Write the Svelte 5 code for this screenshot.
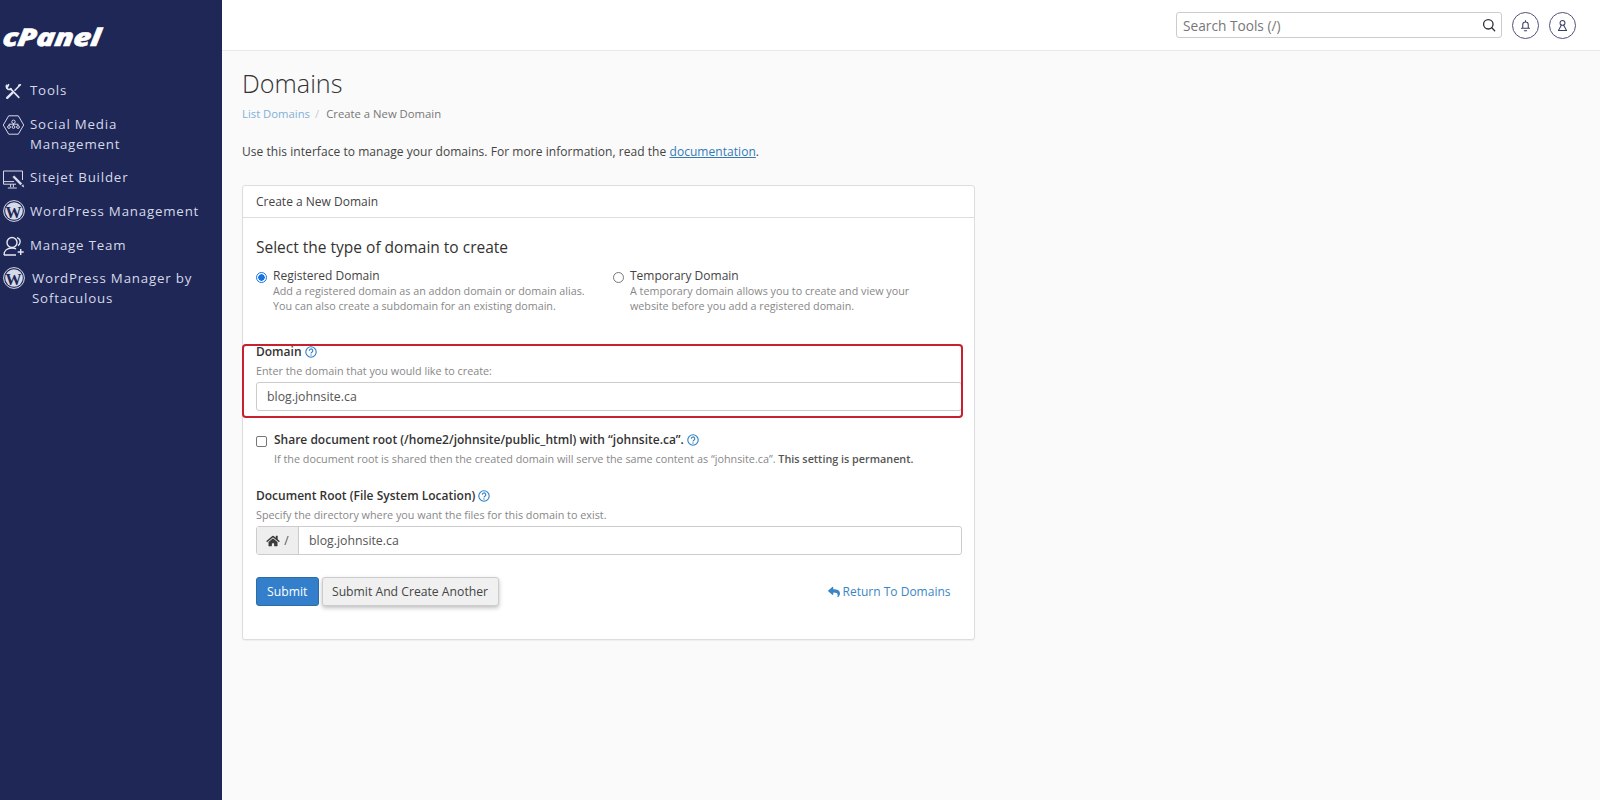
<script>
  const wp = 'wp';
</script>

{#snippet wpIcon()}
  <svg class="ic" viewBox="0 0 24 24" width="24" height="24">
    <circle cx="12" cy="12" r="10.4" fill="none" stroke="#d5d9e8" stroke-width="1"/>
    <circle cx="12" cy="12" r="8.8" fill="#d5d9e8"/>
    <text x="12" y="18.6" text-anchor="middle" class="wp-w">W</text>
  </svg>
{/snippet}

{#snippet help(cls)}
  <svg class="help {cls}" viewBox="0 0 12 12" width="12" height="12">
    <circle cx="6" cy="6" r="5.2" fill="none" stroke="#2f7fc1" stroke-width="1.1"/>
    <path d="M4.3 4.7a1.75 1.75 0 1 1 2.6 1.5c-.6.35-.9.6-.9 1.2" fill="none" stroke="#2f7fc1" stroke-width="1.1"/>
    <circle cx="6" cy="9" r=".7" fill="#2f7fc1"/>
  </svg>
{/snippet}

<div class="shell">
  <aside class="side">
    <div class="logo"><span class="logo-text">cPanel</span></div>
    <nav class="menu">
      <a class="item">
        <svg class="ic" viewBox="0 0 24 24" width="24" height="24" fill="none" stroke="#e4e7f2" stroke-width="1.6" stroke-linecap="round" stroke-linejoin="round">
          <path d="M16.8 19.4 8.4 10.6"/>
          <path d="M4.6 7.2 4.3 8.6a3.2 3.2 0 0 0 4.9 2.4M6.6 6.7 5.4 9.2"/>
          <path d="M17.8 7.2 13 12.2"/>
          <path d="M10.6 14.6 5.2 19.8" stroke-width="2.4"/>
          <path d="M18.4 6.8l-1.6.4"/>
        </svg>
        <span>Tools</span>
      </a>
      <a class="item">
        <svg class="ic" viewBox="0 0 24 24" width="24" height="24" fill="none" stroke="#d5d9e8" stroke-width="1">
          <path d="M6.7 3.8h9.6L21.7 13l-5.4 9.2H6.7L1.3 13z"/>
          <circle cx="11.5" cy="9.8" r="1.7"/><circle cx="7" cy="15" r="1.4"/><circle cx="11.5" cy="15" r="1.4"/><circle cx="16" cy="15" r="1.4"/>
          <path d="M7 13.6v-1.4h9v1.4M11.5 11.5v2.1"/>
        </svg>
        <span>Social Media<br>Management</span>
      </a>
      <a class="item">
        <svg class="ic" viewBox="0 0 24 24" width="24" height="24" fill="none" stroke="#d5d9e8" stroke-width="1">
          <path d="M20.5 15V6H1.5v13.2H14M1.5 16.6H12M8.6 19.2v3M11.4 19.2v3M5.8 23h9"/>
          <path d="M12.2 10.4l8 8.2-1.8 1.7-8-8.2z" fill="#d5d9e8" stroke="none"/>
          <path d="M19.4 21l1.9-1.7.9 3.2z" fill="#d5d9e8" stroke="none"/>
        </svg>
        <span>Sitejet Builder</span>
      </a>
      <a class="item">
        {@render wpIcon()}
        <span>WordPress Management</span>
      </a>
      <a class="item">
        <svg class="ic" viewBox="0 0 24 24" width="24" height="24" fill="none" stroke="#e4e7f2" stroke-width="1.4">
          <circle cx="10" cy="9.5" r="5"/>
          <path d="M2 22c0-4 3-7 8-7 1.5 0 3 .3 4 .9M2 22h12M15 4.6c2.4 1 3.5 2.8 3 5-.3 1.3-1 2.3-2 3M18.7 16v6M15.7 19h6"/>
        </svg>
        <span>Manage Team</span>
      </a>
      <a class="item soft">
        {@render wpIcon()}
        <span>WordPress Manager by<br>Softaculous</span>
      </a>
    </nav>
  </aside>

  <div class="main">
    <header class="top">
      <div class="search">
        <span class="placeholder">Search Tools (/)</span>
        <svg viewBox="0 0 16 16" width="14" height="14" fill="none" stroke="#2b2f3a" stroke-width="1.5" stroke-linecap="round">
          <circle cx="7.2" cy="7.2" r="5.4"/><path d="M11.2 11.2l3.3 3.3"/>
        </svg>
      </div>
      <button class="round" aria-label="Notifications">
        <svg viewBox="0 0 16 16" width="13" height="13" fill="none" stroke="#3b3f66" stroke-width="1.3" stroke-linecap="round">
          <path d="M4.6 11.5V7a3.4 3.4 0 0 1 6.8 0v4.5M3 11.5h10M6.6 14.4h2.8M8 3.4V2"/>
        </svg>
      </button>
      <button class="round" aria-label="Account">
        <svg viewBox="0 0 16 16" width="13" height="13" fill="none" stroke="#3b3f66" stroke-width="1.3" stroke-linecap="round" stroke-linejoin="round">
          <circle cx="8" cy="4.8" r="3"/><path d="M6.6 7.6 3 14.2h10L9.4 7.6"/>
        </svg>
      </button>
    </header>

    <main class="content">
      <h1>Domains</h1>
      <div class="crumbs"><a class="crumb-link">List Domains</a><span class="sep">/</span><span class="crumb-cur">Create a New Domain</span></div>
      <p class="intro">Use this interface to manage your domains. For more information, read the <a class="doc">documentation</a>.</p>

      <section class="card">
        <div class="card-head">Create a New Domain</div>
        <div class="card-body">
          <h2>Select the type of domain to create</h2>
          <div class="radios">
            <label class="radio first">
              <span class="dot on"></span>
              <span class="rtext">
                <span class="rtitle">Registered Domain</span>
                <span class="rdesc">Add a registered domain as an addon domain or domain alias.<br>You can also create a subdomain for an existing domain.</span>
              </span>
            </label>
            <label class="radio">
              <span class="dot"></span>
              <span class="rtext">
                <span class="rtitle">Temporary Domain</span>
                <span class="rdesc">A temporary domain allows you to create and view your<br>website before you add a registered domain.</span>
              </span>
            </label>
          </div>

          <div class="field domain">
            <div class="flabel">Domain {@render help('')}</div>
            <div class="hint">Enter the domain that you would like to create:</div>
            <div class="input">blog.johnsite.ca</div>
            <div class="redbox"></div>
          </div>

          <div class="share">
            <span class="check"></span>
            <div>
              <div class="flabel">Share document root (/home2/johnsite/public_html) with “johnsite.ca”. {@render help('')}</div>
              <div class="hint share-hint">If the document root is shared then the created domain will serve the same content as “johnsite.ca”. <b>This setting is permanent.</b></div>
            </div>
          </div>

          <div class="field docroot">
            <div class="flabel">Document Root (File System Location) {@render help('')}</div>
            <div class="hint">Specify the directory where you want the files for this domain to exist.</div>
            <div class="group">
              <span class="addon">
                <svg viewBox="0 0 576 512" width="14" height="12" fill="#3b3b3b"><path d="M280.37 148.26L96 300.11V464a16 16 0 0 0 16 16l112.06-.29a16 16 0 0 0 15.92-16V368a16 16 0 0 1 16-16h64a16 16 0 0 1 16 16v95.64a16 16 0 0 0 16 16.05L464 480a16 16 0 0 0 16-16V300L295.67 148.26a12.19 12.19 0 0 0-15.3 0zM571.6 251.47L488 182.56V44.05a12 12 0 0 0-12-12h-56a12 12 0 0 0-12 12v72.61L318.47 43a48 48 0 0 0-61 0L4.34 251.47a12 12 0 0 0-1.6 16.9l25.5 31A12 12 0 0 0 45.15 301l235.22-193.74a12.19 12.19 0 0 1 15.3 0L530.9 301a12 12 0 0 0 16.9-1.6l25.5-31a12 12 0 0 0-1.7-16.93z"/></svg>
                /
              </span>
              <span class="gtext">blog.johnsite.ca</span>
            </div>
          </div>

          <div class="actions">
            <button class="btn primary">Submit</button>
            <button class="btn secondary">Submit And Create Another</button>
            <a class="back">
              <svg viewBox="0 0 512 512" width="12" height="12" fill="#3a85c6"><path d="M8.309 189.836L184.313 37.851C199.719 24.546 224 35.347 224 56.015v80.053c160.629 1.839 288 34.032 288 186.258 0 61.441-39.581 122.309-83.333 154.132-13.653 9.931-33.111-2.533-28.077-18.631 45.344-145.012-21.507-183.51-176.59-185.742V360c0 20.7-24.3 31.453-39.687 18.164l-176.004-152c-11.071-9.562-11.086-26.753 0-36.328z"/></svg>
              Return To Domains
            </a>
          </div>
        </div>
      </section>
    </main>
  </div>
</div>

<style>
  :global(body) { margin: 0; overflow: hidden; background: #fafafa; }
  .shell { display: flex; height: 800px; font-family: "Open Sans", sans-serif; color: #333; font-size: 12px; }
  .side { width: 222px; flex: none; background: #1f2756; color: #d5d9e8; }
  .logo { font-family: "Open Sans", sans-serif; font-weight: 800; font-style: italic; font-size: 24.5px; color: #fff; line-height: 30px; padding: 22px 0 0 3px; height: 51px; }
  .logo-text { display: inline-block; transform-origin: left center; transform: scaleX(1.25) skewX(-6deg); -webkit-text-stroke: .5px #fff; letter-spacing: -.3px; }
  .menu { display: flex; flex-direction: column; }
  .item { display: flex; align-items: flex-start; gap: 4px; padding: 7px 0 6.7px 2px; font-size: 13.3px; line-height: 20px; letter-spacing: .8px; }
  .item.soft { gap: 6px; }
  .ic { flex: none; margin: -2px 0; }
  .wp-w { font-family: "Liberation Serif", serif; font-weight: 700; font-size: 16px; fill: #1f2756; }

  .main { flex: 1; min-width: 0; display: flex; flex-direction: column; }
  .top { height: 50px; background: #fff; border-bottom: 1px solid #e8e8e8; display: flex; align-items: center; justify-content: flex-end; gap: 10px; padding: 0 24px 0 0; flex: none; }
  .search { width: 326px; height: 26px; box-sizing: border-box; border: 1px solid #ccc; border-radius: 3px; display: flex; align-items: center; justify-content: space-between; padding: 0 5px 0 6px; background: #fff; }
  .placeholder { font-size: 13.7px; color: #777; }
  .round { width: 27px; height: 27px; border-radius: 50%; border: 1px solid #50527a; background: #fff; padding: 0; display: flex; align-items: center; justify-content: center; }

  .content { padding: 0 0 0 20px; flex: 1; }
  h1 { font-weight: 300; font-size: 25.2px; line-height: 34px; margin: 15px 0 0; color: #333; }
  .crumbs { font-size: 11.3px; line-height: 18px; margin-top: 5px; color: #777; display: flex; }
  .crumb-link { color: #7fb0d8; }
  .sep { color: #ccc; padding: 0 7px 0 5px; }
  .intro { margin: 20px 0 0; line-height: 18px; font-size: 12px; color: #444; letter-spacing: .05px; }
  .doc { color: #337ab7; text-decoration: underline; }

  .card { width: 733px; box-sizing: border-box; margin-top: 24px; background: #fff; border: 1px solid #ddd; border-radius: 3px; height: 455px; box-shadow: 0 1px 1px rgba(0,0,0,.05); }
  .card-head { height: 31px; line-height: 31px; padding: 0 13px; border-bottom: 1px solid #ddd; font-size: 12px; color: #444; }
  .card-body { padding: 18px 12.5px 0 13px; }
  h2 { margin: 0; font-weight: 400; font-size: 15.5px; line-height: 22px; color: #333; }
  .radios { display: flex; margin-top: 10px; }
  .radio { display: flex; gap: 6px; align-items: flex-start; }
  .radio.first { width: 357px; }
  .dot { width: 11px; height: 11px; box-sizing: border-box; border-radius: 50%; border: 1px solid #767676; margin-top: 4px; flex: none; }
  .dot.on { border: 1.5px solid #1473e6; background: radial-gradient(circle, #1473e6 0 3px, #fff 3.4px); }
  .rtext { display: flex; flex-direction: column; }
  .rtitle { font-size: 12px; line-height: 16px; color: #444; }
  .rdesc { font-size: 10.75px; line-height: 15px; color: #888; }

  .field { position: relative; }
  .domain { margin-top: 29px; }
  .flabel { font-size: 12px; font-weight: 600; line-height: 18px; color: #333; display: flex; align-items: center; gap: 3px; }
  .help { flex: none; }
  .hint { font-size: 10.8px; line-height: 16px; color: #888; margin-top: 2px; }
  .input { height: 29px; box-sizing: border-box; border: 1px solid #ccc; border-radius: 3px; line-height: 28px; padding: 0 10px; font-size: 12.3px; color: #555; margin-top: 3px; background: #fff; }
  .redbox { position: absolute; left: -14px; right: -1.5px; top: 1px; bottom: -7px; border: 2px solid #c8202f; border-radius: 4px; pointer-events: none; }

  .share { display: flex; gap: 7px; margin-top: 20px; }
  .check { width: 11px; height: 11px; box-sizing: border-box; border: 1px solid #767676; border-radius: 2px; flex: none; margin-top: 5px; background: #fff; }
  .share-hint { margin-top: 2px; }
  .share-hint b { font-weight: 600; color: #555; }
  .docroot { margin-top: 20px; }
  .group { display: flex; height: 29px; box-sizing: border-box; border: 1px solid #ccc; border-radius: 3px; margin-top: 3px; background: #fff; }
  .addon { width: 42px; flex: none; box-sizing: border-box; background: #eee; border-right: 1px solid #ccc; display: flex; align-items: center; justify-content: center; gap: 4px; color: #555; font-size: 12px; }
  .gtext { line-height: 28px; padding: 0 10px; font-size: 12.3px; color: #555; }

  .actions { display: flex; align-items: center; gap: 3px; margin-top: 22px; position: relative; }
  .btn { height: 29px; box-sizing: border-box; border-radius: 3px; font-family: inherit; font-size: 12.2px; padding: 0; }
  .primary { width: 62.5px; background: #337fcc; border: 1px solid #2e6da4; color: #fff; }
  .secondary { width: 177px; background: #f0f0f0; border: 1px solid #ccc; color: #444; box-shadow: 0 2px 4px rgba(0,0,0,.25); }
  .back { margin-left: auto; margin-right: 11px; color: #3a85c6; font-size: 12px; display: flex; align-items: center; gap: 3px; }
</style>
